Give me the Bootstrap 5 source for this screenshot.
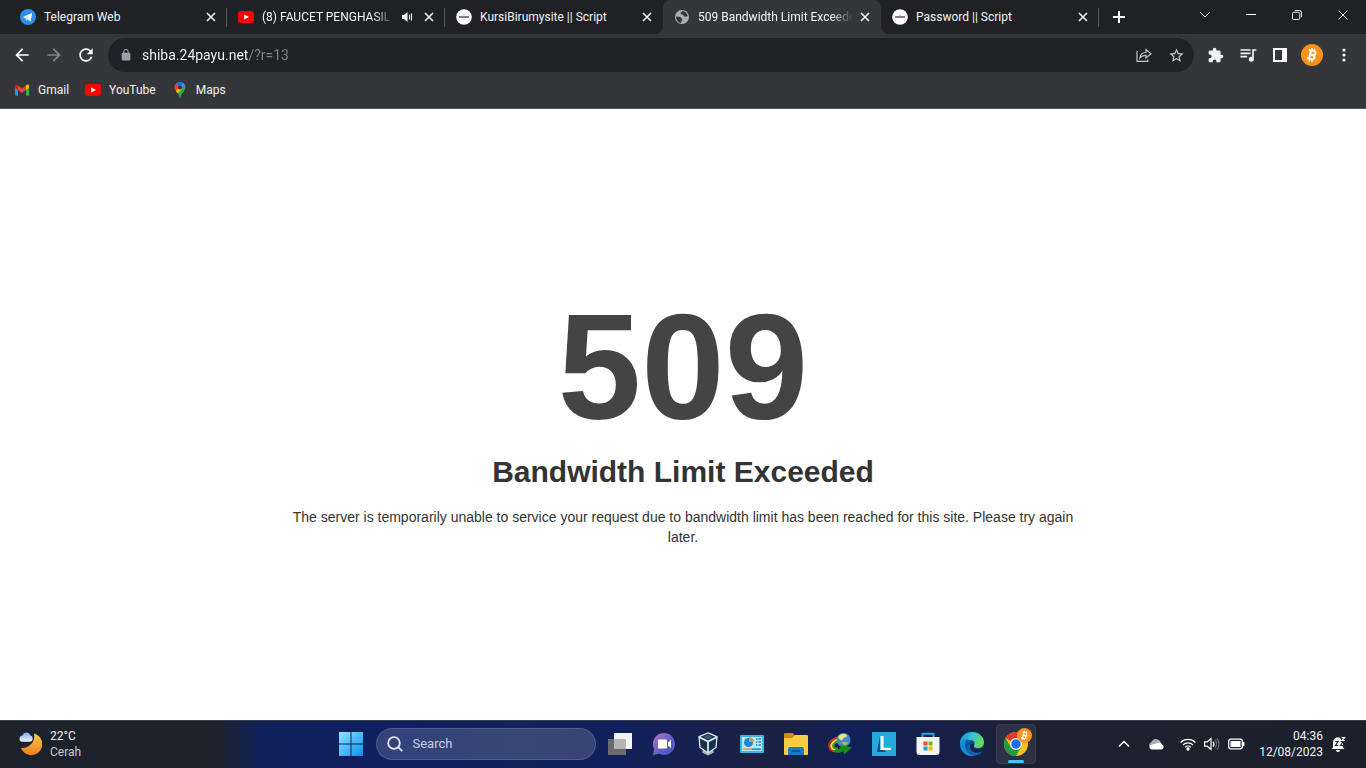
<!DOCTYPE html>
<html lang="en">
<head>
<meta charset="utf-8">
<meta name="viewport" content="width=device-width, initial-scale=1">
<title>509 Bandwidth Limit Exceeded</title>
<link href="https://cdn.jsdelivr.net/npm/bootstrap@5.3.0/dist/css/bootstrap.min.css" rel="stylesheet">
<style>
  :root { --strip: #202124; --bar: #35363a; }
  body { font-family: Roboto, "Open Sans", sans-serif; font-size: 12px; line-height: 16px; color: #f1f3f4; background: #fff; }
  svg { display: block; flex: none; }
  button { padding: 0; border: 0; background: transparent; color: inherit; display: flex; align-items: center; justify-content: center; flex: none; }
  a { color: inherit; text-decoration: none; }

  /* tab strip */
  .tab-strip { background: var(--strip); height: 34px; padding-left: 9px; }
  .browser-tab { flex: 0 1 218px; min-width: 0; padding: 0 8px 0 11px; position: relative; }
  .browser-tab.split::after { content: ""; position: absolute; right: 0; top: 8px; height: 19px; width: 1px; background: #5a5c60; }
  .browser-tab.current { background: var(--bar); border-radius: 8px 8px 0 0; }
  .browser-tab.current::before, .browser-tab.current::after { content: ""; position: absolute; bottom: 0; width: 8px; height: 8px; }
  .browser-tab.current::before { right: 100%; background: radial-gradient(circle at 0 0, transparent 8px, var(--bar) 8px); }
  .browser-tab.current::after { left: 100%; background: radial-gradient(circle at 100% 0, transparent 8px, var(--bar) 8px); }
  .tab-title { flex: 1 1 0; min-width: 0; margin-left: 8px; margin-right: 4px; overflow: hidden; white-space: nowrap; }
  .tab-title.fades { -webkit-mask-image: linear-gradient(to left, transparent, #000 22px); mask-image: linear-gradient(to left, transparent, #000 22px); }
  .tab-x { width: 16px; height: 16px; }
  .tab-sound { width: 16px; height: 16px; margin-right: 6px; }
  .new-tab { width: 28px; height: 34px; margin-left: 6px; }
  .win-btn { width: 46px; height: 29px; }

  /* toolbar */
  .toolbar { background: var(--bar); height: 42px; padding: 0 6px; }
  .tool-btn { width: 32px; height: 32px; }
  .omnibox { background: var(--strip); height: 34px; border-radius: 17px; padding: 0 2px 0 10px; margin: 0 6px; }
  .url-input { border: 0; outline: 0; padding: 0; margin-left: 8px; min-width: 0; font-size: 14px; line-height: 20px; color: #e8eaed;
    background: linear-gradient(to right, #fff 107px, #80868b 107px); -webkit-background-clip: text; background-clip: text; -webkit-text-fill-color: transparent; }
  .bookmarks { background: var(--bar); height: 33px; padding: 0 14px 5px; border-bottom: 1px solid #56575b; }

  /* error page */
  .error-page { grid-template-rows: 30% auto; font-family: "Liberation Sans", Arial, sans-serif; background: #fff; color: #444; }
  .error-body { grid-row: 2; width: 100%; max-width: 800px; font-size: 14px; line-height: 20px; color: #333; }
  .error-code { font-size: 150px; line-height: 150px; font-weight: 700; color: #444; margin: 0; }
  .error-name { font-size: 30px; line-height: 20px; font-weight: 700; color: #333; margin: 20px 0 25px; }

  /* taskbar */
  .taskbar { height: 48px; grid-template-columns: 1fr auto 1fr; border-top: 1px solid #3b404c; padding-bottom: 1px;
    background: linear-gradient(to right, #1b222c 0, #1b222c 16%, #12225a 19%, #0e1e62 30%, #12245a 38%, #111f5c 45%, #1b2142 56%, #101f56 63%, #181f45 70%, #1c2130 76%, #1b212b 100%); }
  .task-btn { width: 44px; height: 44px; position: relative; }
  .task-btn.running::before { content: ""; position: absolute; inset: 2px; border-radius: 4px; background: rgba(255,255,255,.08); border: 1px solid rgba(255,255,255,.06); }
  .task-btn.running::after { content: ""; position: absolute; bottom: 3px; left: 14px; width: 16px; height: 3px; border-radius: 2px; background: #4cc2ff; }
  .task-btn svg { position: relative; }
  .task-search { width: 220px; height: 32px; border-radius: 16px; padding-left: 10px; gap: 10px; margin: 0 2px 0 3px; background: rgba(255,255,255,.16); border: 1px solid rgba(255,255,255,.14); }
  .task-search input { border: 0; outline: 0; background: transparent; color: #fff; padding: 0; min-width: 0; width: 160px; font-size: 13px; line-height: 20px; }
  .task-search input::placeholder { color: #c9cde0; opacity: 1; }
  .weather { padding-left: 18px; }
  .sky { color: #c6cad0; }
  .tray { padding-right: 20px; }
  .tray-more { margin-right: 18px; }
  .tray-clock { white-space: nowrap; margin-left: 14px; }
</style>
</head>
<body>
<svg width="0" height="0" class="position-absolute" aria-hidden="true">
  <symbol id="x" viewBox="0 0 16 16"><path d="M4 4l8 8M12 4l-8 8" stroke="#f1f3f4" stroke-width="1.600"/></symbol>
  <symbol id="yt" viewBox="0 0 16 16"><rect y="2" width="16" height="12" rx="3" fill="#f00"/><path d="M6.200 5.400v5.200L11 8z" fill="#fff"/></symbol>
  <symbol id="site" viewBox="0 0 16 16"><circle cx="8" cy="8" r="7.800" fill="#fff"/><path d="M3 8h10" stroke="#44305e" stroke-width="1.300"/><path d="M8 5.500v1.700" stroke="#e39a69"/></symbol>
  <symbol id="btc" viewBox="0 0 22 22"><circle cx="11" cy="11" r="11" fill="#f7931a"/><g transform="rotate(13 11 11)" fill="none" stroke="#fff" stroke-width="2"><path d="M6.800 6.600h5a2.100 2.100 0 0 1 0 4.300H9m3 0a2.300 2.300 0 0 1 0 4.500H6.800M9 6.600v8.800"/><path d="M9.600 4.300v2.400m2.700-2.400v2.400m-2.700 8.700v2.400m2.700-2.400v2.400" stroke-width="1.400"/></g></symbol>
</svg>

<div class="vh-100 d-flex flex-column">
  <header>
    <div class="tab-strip d-flex">
      <div class="browser-tab split d-flex align-items-center">
        <svg width="16" height="16" viewBox="0 0 16 16"><circle cx="8" cy="8" r="8" fill="#2d8fea"/><path d="M2.800 7.900l9.400-4-1.600 8.500-3-2.200-1.500 1.500-.5-2.500z" fill="#fff"/><path d="M5.800 9l4.300-3.200-3.200 4.100-.7 1.500z" fill="#b5d5f2"/></svg>
        <span class="tab-title">Telegram Web</span>
        <button class="tab-x" aria-label="Close tab"><svg width="16" height="16"><use href="#x"/></svg></button>
      </div>
      <div class="browser-tab split d-flex align-items-center">
        <svg width="16" height="16"><use href="#yt"/></svg>
        <span class="tab-title fades">(8) FAUCET PENGHASIL S</span>
        <button class="tab-sound" aria-label="Mute tab"><svg width="16" height="16" viewBox="0 0 16 16" fill="#f1f3f4"><path d="M3 6h2l3.500-3v10L5 10H3z"/><path d="M10.500 5.500v5M12.500 4.500v7" stroke="#f1f3f4" stroke-width="1.100"/></svg></button>
        <button class="tab-x" aria-label="Close tab"><svg width="16" height="16"><use href="#x"/></svg></button>
      </div>
      <div class="browser-tab d-flex align-items-center">
        <svg width="16" height="16"><use href="#site"/></svg>
        <span class="tab-title">KursiBirumysite || Script</span>
        <button class="tab-x" aria-label="Close tab"><svg width="16" height="16"><use href="#x"/></svg></button>
      </div>
      <div class="browser-tab current d-flex align-items-center">
        <svg width="16" height="16" viewBox="0 0 16 16"><circle cx="8" cy="8" r="7" fill="#a9adb2"/><path d="M2.200 7.200c1.600.8 3.600.2 5 1.600 1 .9.300 2 1.600 2.300-1.200.5-1.700 1.600-1.900 2.900-3-.6-5.200-3.600-4.700-6.800zM8.400 2c-.5 1.300-2 1-1.800 2.600.5 1.500 2.500.5 3.100 1.900.4 1.300 2.400 1.500 4 .8-.5-2.900-2.600-5-5.300-5.300z" fill="#35363a"/></svg>
        <span class="tab-title fades">509 Bandwidth Limit Exceeded</span>
        <button class="tab-x" aria-label="Close tab"><svg width="16" height="16"><use href="#x"/></svg></button>
      </div>
      <div class="browser-tab split d-flex align-items-center">
        <svg width="16" height="16"><use href="#site"/></svg>
        <span class="tab-title">Password || Script</span>
        <button class="tab-x" aria-label="Close tab"><svg width="16" height="16"><use href="#x"/></svg></button>
      </div>
      <button class="new-tab" aria-label="New tab"><svg width="14" height="14" viewBox="0 0 14 14"><path d="M7 1v12M1 7h12" stroke="#fff" stroke-width="2"/></svg></button>
      <div class="d-flex ms-auto">
        <button class="win-btn" aria-label="Search tabs"><svg width="12" height="12" viewBox="0 0 12 12"><path d="M1 3l5 5 5-5" fill="none" stroke="#e8eaed"/></svg></button>
        <button class="win-btn" aria-label="Minimize"><svg width="10" height="10" viewBox="0 0 10 10"><path d="M0 4.500h10" stroke="#fff"/></svg></button>
        <button class="win-btn" aria-label="Restore"><svg width="10" height="10" viewBox="0 0 11 11" fill="none" stroke="#fff"><rect x=".5" y="2.500" width="8" height="8" rx="1.500"/><path d="M3 .5h5a2.500 2.500 0 0 1 2.500 2.500v5"/></svg></button>
        <button class="win-btn" aria-label="Close"><svg width="10" height="10" viewBox="0 0 11 11"><path d="M.5.5l10 10M10.500.5l-10 10" stroke="#fff"/></svg></button>
      </div>
    </div>

    <div class="toolbar d-flex align-items-center">
      <button class="tool-btn" aria-label="Back"><svg width="20" height="20" viewBox="0 0 24 24" fill="#fff"><path d="M20 11H7.830l5.590-5.590L12 4l-8 8 8 8 1.410-1.410L7.830 13H20z"/></svg></button>
      <button class="tool-btn" aria-label="Forward"><svg width="20" height="20" viewBox="0 0 24 24" fill="#85868a"><path d="M4 11h12.170l-5.590-5.590L12 4l8 8-8 8-1.410-1.410L16.170 13H4z"/></svg></button>
      <button class="tool-btn" aria-label="Reload"><svg width="20" height="20" viewBox="0 0 24 24" fill="#fff"><path d="M17.650 6.350C16.200 4.900 14.210 4 12 4c-4.420 0-7.990 3.580-7.990 8s3.570 8 7.990 8c3.730 0 6.840-2.550 7.730-6h-2.080c-.82 2.330-3.040 4-5.650 4-3.310 0-6-2.690-6-6s2.690-6 6-6c1.660 0 3.140.69 4.220 1.780L13 11h7V4z"/></svg></button>
      <div class="omnibox d-flex align-items-center flex-grow-1">
        <svg width="16" height="12" viewBox="1 1 22 22" fill="#9da1a8"><path d="M18 8h-1V6c0-2.760-2.240-5-5-5S7 3.240 7 6v2H6c-1.100 0-2 .9-2 2v10c0 1.100.9 2 2 2h12c1.100 0 2-.9 2-2V10c0-1.100-.9-2-2-2zM15.100 8H8.900V6c0-1.710 1.390-3.100 3.100-3.100s3.100 1.390 3.100 3.100z"/></svg>
        <input class="url-input flex-grow-1" type="text" value="shiba.24payu.net/?r=13" aria-label="Address and search bar">
        <button class="tool-btn" aria-label="Share this page"><svg width="16" height="16" viewBox="0 0 16 16" fill="none" stroke="#c3c5c9" stroke-width="1.200"><path d="M1 4v10.400h10.800V12.500"/><path d="M4 11c.2-3.500 2.500-5.400 6-5.500V2.500L15 6.800l-5 4.200V8.300C7.500 8.300 5.500 9 4 11z"/></svg></button>
        <button class="tool-btn" aria-label="Bookmark this tab"><svg width="17" height="17" viewBox="0 0 24 24" fill="#c8cacd"><path d="M22 9.240l-7.190-.62L12 2 9.190 8.630 2 9.240l5.460 4.730L5.820 21 12 17.270 18.180 21l-1.630-7.030zM12 15.400l-3.760 2.270 1-4.280-3.320-2.880 4.380-.38L12 6.100l1.710 4.040 4.380.38-3.320 2.880 1 4.280z"/></svg></button>
      </div>
      <button class="tool-btn" aria-label="Extensions"><svg width="16" height="16" viewBox="1 0 23 23" fill="#f1f3f4"><path d="M20.500 11H19V7c0-1.100-.9-2-2-2h-4V3.500C13 2.120 11.880 1 10.500 1S8 2.120 8 3.500V5H4c-1.100 0-1.990.9-1.990 2v3.800H3.500c1.490 0 2.700 1.210 2.700 2.700s-1.210 2.700-2.700 2.700H2V20c0 1.100.9 2 2 2h3.800v-1.500c0-1.490 1.210-2.700 2.700-2.700s2.700 1.210 2.700 2.700V22H17c1.100 0 2-.9 2-2v-4h1.500a2.500 2.500 0 0 0 0-5z"/></svg></button>
      <button class="tool-btn" aria-label="Media controls"><svg width="20" height="20" viewBox="0 0 24 24" fill="#f1f3f4"><path d="M15 5H3v2h12zm0 4H3v2h12zM3 15h8v-2H3zM17 5v9.180c-.31-.11-.65-.18-1-.18a3 3 0 1 0 3 3V7h3V5z"/></svg></button>
      <button class="tool-btn" aria-label="Side panel"><svg width="14" height="14" viewBox="0 0 14 14"><path d="M1 1h12v12H1z" fill="none" stroke="#fff" stroke-width="2"/><path d="M9 1h4v12H9z" fill="#fff"/></svg></button>
      <button class="tool-btn" aria-label="Profile"><svg width="22" height="22"><use href="#btc"/></svg></button>
      <button class="tool-btn" aria-label="Menu"><svg width="4" height="14" viewBox="0 0 4 14" fill="#f1f3f4"><circle cx="2" cy="2" r="1.600"/><circle cx="2" cy="7" r="1.600"/><circle cx="2" cy="12" r="1.600"/></svg></button>
    </div>

    <nav class="bookmarks d-flex align-items-center gap-3" aria-label="Bookmarks">
      <a href="#" class="d-flex align-items-center gap-2"><svg width="16" height="16" viewBox="0 0 16 16"><path d="M1 4.200V13a.8.8 0 0 0 .8.800H4V7z" fill="#4285f4"/><path d="M15 4.200V13a.8.8 0 0 1-.8.800H12V7z" fill="#34a853"/><path d="M12 3.400V8l3-2.300V4c0-1.700-1.800-2-3-.6z" fill="#fbbc04"/><path d="M4 3.400V8L1 5.700V4c0-1.700 1.800-2 3-.6z" fill="#c5221f"/><path d="M4 3.400l4 3.200 4-3.200V8l-4 3-4-3z" fill="#ea4335"/></svg>Gmail</a>
      <a href="#" class="d-flex align-items-center gap-2"><svg width="16" height="16"><use href="#yt"/></svg>YouTube</a>
      <a href="#" class="d-flex align-items-center gap-2"><svg width="16" height="16" viewBox="0 0 16 16"><clipPath id="pin"><path d="M8 0a5.400 5.400 0 0 0-5.400 5.500C2.600 9.500 7 10.500 7.400 15.500c.1.700 1.100.7 1.200 0C9 10.500 13.400 9.500 13.400 5.500A5.400 5.400 0 0 0 8 0z"/></clipPath><g clip-path="url(#pin)"><path d="M0 0h16v16H0z" fill="#34a853"/><path d="M3 0h10l-6 6z" fill="#1a73e8"/><path d="M9 4l3-4 3 3-4 4z" fill="#4285f4"/><path d="M0 0l4 1.500L8 5 3 10z" fill="#ea4335"/><path d="M3 10l5-6 2 3-5 5z" fill="#fbbc04"/></g><circle cx="8" cy="5.500" r="2" fill="#35363a"/></svg>Maps</a>
    </nav>
  </header>

  <main class="error-page d-grid flex-grow-1">
    <div class="error-body mx-auto text-center">
      <h1 class="error-code">509</h1>
      <h2 class="error-name">Bandwidth Limit Exceeded</h2>
      <p class="mb-0">The server is temporarily unable to service your request due to bandwidth limit has been reached for this site. Please try again later.</p>
    </div>
  </main>

  <footer class="taskbar d-grid align-items-center">
    <div class="weather d-flex align-items-center gap-2">
      <svg width="24" height="24" viewBox="0 0 24 24"><defs><linearGradient id="moon" x2="0" y2="1"><stop stop-color="#fbc94a"/><stop offset="1" stop-color="#ee7d1b"/></linearGradient><linearGradient id="cloud" x2="0" y2="1"><stop stop-color="#7eaaf0"/><stop offset="1" stop-color="#f0f4ff"/></linearGradient></defs><path d="M16 1.500A11 11 0 1 1 3 16 12 12 0 0 0 16 1.500z" fill="url(#moon)"/><path d="M4 9.800a3.200 3.200 0 0 1 .4-6.300 4.300 4.300 0 0 1 8-.3 3.400 3.400 0 0 1-.4 6.600z" fill="url(#cloud)"/></svg>
      <div>22°C<br><span class="sky">Cerah</span></div>
    </div>

    <nav class="d-flex align-items-center" aria-label="Taskbar">
      <button class="task-btn" aria-label="Start"><svg width="24" height="24" viewBox="0 0 24 24"><defs><linearGradient id="win" gradientUnits="userSpaceOnUse" x2="24" y2="24"><stop stop-color="#8fe3ff"/><stop offset="1" stop-color="#0a90ef"/></linearGradient></defs><path d="M0 0h11.500v11.500H0zM12.500 0H24v11.500H12.500zM0 12.500h11.500V24H0zM12.500 12.500H24V24H12.500z" fill="url(#win)"/></svg></button>
      <div class="task-search d-flex align-items-center">
        <svg width="16" height="16" viewBox="0 0 16 16" fill="none" stroke="#e5e8f4" stroke-width="1.800"><circle cx="7" cy="7" r="5.800"/><path d="M11.200 11.200l4 4"/></svg>
        <input type="search" placeholder="Search" aria-label="Search">
      </div>
      <button class="task-btn" aria-label="Task view"><svg width="24" height="24" viewBox="0 0 24 24"><path d="M6 1h18v16H6z" fill="#f3f3f3"/><path d="M0 7h18v16H0z" fill="#6b6b6b"/><path d="M6 7h12v10H6z" fill="#b5b5b5"/></svg></button>
      <button class="task-btn" aria-label="Chat"><svg width="24" height="24" viewBox="0 0 24 24"><defs><linearGradient id="chat" x2="1" y2="1"><stop stop-color="#b07ab8"/><stop offset=".5" stop-color="#6b61c8"/><stop offset="1" stop-color="#454ec0"/></linearGradient></defs><path d="M12 1a11 11 0 1 1-5 20.800L1 23.200l1-6.300A11 11 0 0 1 12 1z" fill="url(#chat)"/><rect x="6" y="7.500" width="9" height="9" rx="1" fill="#fff"/><path d="M16 10.500l3-2.500v8l-3-2.500z" fill="#fff"/></svg></button>
      <button class="task-btn" aria-label="VirtualBox"><svg width="24" height="24" viewBox="0 0 24 24"><path d="M7 18l-1 2.500 6 3 6-3-1-2.500z" fill="#a8b4bf"/><path d="M12 .9l9 3.800-1 10.800-8 5.500-8-5.500L3 4.700z" fill="#123150" stroke="#dfe8ee" stroke-width="1.300"/><path d="M3 5l9 4.500L21 5M12 9.500V20" fill="none" stroke="#e8eff4" stroke-width="1.700"/><path d="M7 5l5-2.500L17 5l-5 2.500z" fill="#355873"/></svg></button>
      <button class="task-btn" aria-label="Control Panel"><svg width="24" height="24" viewBox="0 0 24 24"><rect y="3" width="24" height="18" rx="1" fill="#42b3e8"/><path d="M2 5h20v14H2z" fill="#b8e8fa"/><circle cx="8.500" cy="10.500" r="4.500" fill="#1689d2"/><path d="M9 10V5a5 5 0 0 1 5 5z" fill="#f49431"/><path d="M16 7h5M16 10h5M16 13h5" stroke="#2482c5" stroke-width="1.500" stroke-dasharray="1.500 1 3"/><path d="M3 17.200h9" stroke="#f49431" stroke-width="1.600"/><path d="M12 17.200h9" stroke="#2482c5" stroke-width="1.600"/></svg></button>
      <button class="task-btn" aria-label="File Explorer"><svg width="24" height="24" viewBox="0 0 24 24"><path d="M0 2a1 1 0 0 1 1-1h8l2 3-3 4H0z" fill="#d58b12"/><path d="M0 6h8l3-3h12a1 1 0 0 1 1 1v18a1 1 0 0 1-1 1H1a1 1 0 0 1-1-1z" fill="#fbcb45"/><path d="M4 23v-6a2 2 0 0 1 2-2h12a2 2 0 0 1 2 2v6z" fill="#1679c8"/><path d="M8 19h8" stroke="#0b4f91" stroke-width="1.500"/></svg></button>
      <button class="task-btn" aria-label="Internet Download Manager"><svg width="24" height="24" viewBox="0 0 24 24"><g fill="none"><path d="M11 5C4 6.500 0 11 1.500 15.500c.7 2 2.500 3.500 5 4.200" stroke="#d92e24" stroke-width="2"/><path d="M11 7C5.500 8.500 2.500 12 3.500 15c.6 1.800 2 2.500 4 3" stroke="#ffdf2b" stroke-width="2.200"/><path d="M11 9c-4 1-6.500 3.500-5.500 5.800.5 1.400 2 1.900 4.500 2" stroke="#2daa32" stroke-width="2"/></g><circle cx="15.500" cy="8" r="7" fill="#4b86c9"/><path d="M10 5c3-4.500 8-3.500 9-1.500-1 3-3 1-4 3.500s-4 1-5-2z" fill="#e3e38a"/><path d="M14 11c2-2 5-1 6 0-1 2-4 3.500-6 0z" fill="#a9bb6a"/><path d="M5 18.500c2.500 0 5.500-1 8-3L11 13l13 2.500-8 7-.5-3.500c-4 2.500-8 2.500-10.500-.5z" fill="#168f20"/></svg></button>
      <button class="task-btn" aria-label="L"><svg width="24" height="24" viewBox="0 0 24 24"><path d="M0 0h24v24H0z" fill="#27a9da"/><path d="M8 4L5 20h9l-3-4z" fill="#174b7b"/><text x="7" y="18" fill="#fff" font-family="Liberation Sans" font-size="20" font-weight="700">L</text></svg></button>
      <button class="task-btn" aria-label="Microsoft Store"><svg width="24" height="24" viewBox="0 0 24 24"><path d="M6.500 6V1.800h11V6" fill="none" stroke="#24a5e8" stroke-width="2"/><path d="M.5 5h23v15a3 3 0 0 1-3 3h-17a3 3 0 0 1-3-3z" fill="#f4f4f5"/><path d="M7.500 9.500h4v4h-4z" fill="#e84c2b"/><path d="M12.500 9.500h4v4h-4z" fill="#74b51a"/><path d="M7.500 14.500h4v4h-4z" fill="#18a0e5"/><path d="M12.500 14.500h4v4h-4z" fill="#f8b90b"/></svg></button>
      <button class="task-btn" aria-label="Edge"><svg width="24" height="24" viewBox="0 0 24 24"><defs><linearGradient id="edge" x2="1" y2=".4"><stop stop-color="#1689cf"/><stop offset=".5" stop-color="#35c1da"/><stop offset="1" stop-color="#67d957"/></linearGradient></defs><circle cx="12" cy="12" r="12" fill="#0d529d"/><path d="M0 12C-.2 5 5 0 12 0s12 5 12 10c0 4-3 6-6 6-3.500 0-5-1-4-2.500 2-2.800-.5-5.500-4-5.500C5 8 0 10 0 14z" fill="url(#edge)"/><path d="M0 12c1-4 5-6 9-5-3 1-5 5-3.500 9 1.500 4.500 5 7 9.500 7.700C6 25.500 0 19 0 12z" fill="#178bd5"/><path d="M14 13.500c-1 1.500.5 3.500 4 3.200 2-.2 4-.9 5.500-1.800l.5 3-3 3-4-.3c-5 .4-9-5-6-9 1.500-.8 3-.1 3 1.900z" fill="#17244a"/><path d="M9.500 12c-1.500 5 3 9.500 8 9 2.300-.2 4-1.300 5-2.200-3 5.500-10 6.500-14 2.500-3.500-3.500-2.500-8 1-9.300z" fill="#1160ad"/></svg></button>
      <button class="task-btn running" aria-label="Chrome"><svg width="32" height="32" viewBox="0 0 32 32"><g transform="translate(4 4)"><circle cx="12" cy="12" r="12" fill="#fbc116"/><path d="M12 12L1.600 6A12 12 0 0 1 22.400 6H12z" fill="#e33b2e"/><path d="M1.600 6A12 12 0 0 0 12 24l5.200-9L12 12l-5.200 3z" fill="#229a46"/><circle cx="12" cy="12" r="6" fill="#fff"/><circle cx="12" cy="12" r="4.700" fill="#1a6fe8"/></g><svg x="17" y="0" width="15" height="15" viewBox="0 0 22 22"><use href="#btc"/></svg></svg></button>
    </nav>

    <div class="tray d-flex align-items-center justify-content-end">
      <button class="tray-more" aria-label="Show hidden icons"><svg width="12" height="12" viewBox="0 0 12 12"><path d="M1 8.500l5-5 5 5" fill="none" stroke="#fff" stroke-width="1.500"/></svg></button>
      <button class="me-3" aria-label="OneDrive"><svg width="16" height="12" viewBox="0 0 16 12"><path d="M3 10a3.300 3.300 0 0 1 .4-6A5 5 0 0 1 12 3l2 4z" fill="#a9adb3"/><path d="M3.500 11.500a2.500 2.500 0 0 1-.5-4.800L8 5.500l3-1a4 4 0 0 1 3 2 2.600 2.600 0 0 1-.5 5z" fill="#fff"/></svg></button>
      <button class="me-2" aria-label="Wi-Fi"><svg width="16" height="14" viewBox="0 0 16 14" fill="none" stroke="#fff" stroke-width="1.300"><path d="M.6 5.500a10.500 10.500 0 0 1 14.800 0M3 8a7 7 0 0 1 10 0M5.200 10.300a4 4 0 0 1 5.600 0"/><circle cx="8" cy="12" r="1" fill="#fff"/></svg></button>
      <button class="me-2" aria-label="Volume"><svg width="16" height="14" viewBox="0 0 16 14" fill="none" stroke="#fff" stroke-width="1.200"><path d="M.6 4.800h2.600L7 1.500v11L3.200 9.200H.6zM9 4.500a4 4 0 0 1 0 5"/><path d="M11 3a6 6 0 0 1 0 8M13 1.500a8.500 8.500 0 0 1 0 11" stroke="#656b75"/></svg></button>
      <button aria-label="Battery"><svg width="17" height="12" viewBox="0 0 17 12"><rect x=".7" y="1.200" width="13.600" height="9.600" rx="2" fill="none" stroke="#fff" stroke-width="1.300"/><rect x="2.500" y="3" width="10" height="6" rx=".5" fill="#fff"/><path d="M15.700 4v4" stroke="#fff" stroke-width="1.500"/></svg></button>
      <div class="tray-clock text-end">04:36<br>12/08/2023</div>
      <button class="ms-2" aria-label="Notifications"><svg width="15" height="16" viewBox="0 0 15 16"><path d="M2 11.500V6.500a5 5 0 0 1 7-4.700L12 6v5.500l1.500 1.500H.5z" fill="#fff"/><path d="M5 14h4a2 2 0 0 1-4 0z" fill="#fff"/><path d="M4.500 5.500H7l-2.500 4H7M9.500 5.500H12l-2.500 4H12" fill="none" stroke="#1b212b" stroke-width="1.200"/><path d="M8 0h7v5h-4z" fill="#1b212b"/><path d="M10.500 1.500h3l-2.500 3h3" fill="none" stroke="#fff" stroke-width="1.200"/></svg></button>
    </div>
  </footer>
</div>
<script src="https://cdn.jsdelivr.net/npm/bootstrap@5.3.0/dist/js/bootstrap.bundle.min.js"></script>
</body>
</html>
